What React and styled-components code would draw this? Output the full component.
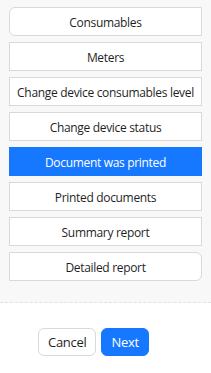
import React, { useState } from "react";
import styled, { createGlobalStyle } from "styled-components";

const GlobalStyle = createGlobalStyle`
  html, body {
    margin: 0;
    padding: 0;
    background: #ffffff;
    font-family: "Open Sans", "Noto Sans", "Liberation Sans", sans-serif;
  }
`;

const options = [
  "Consumables",
  "Meters",
  "Change device consumables level",
  "Change device status",
  "Document was printed",
  "Printed documents",
  "Summary report",
  "Detailed report",
];

function App() {
  const [selected, setSelected] = useState("Document was printed");
  return (
    <>
      <GlobalStyle />
      <Page>
        <Panel>
          <OptionGroup>
            {options.map((opt, i) => (
              <Option
                key={opt}
                $active={opt === selected}
                $first={i === 0}
                $last={i === options.length - 1}
                onClick={() => setSelected(opt)}
              >
                {opt}
              </Option>
            ))}
          </OptionGroup>
        </Panel>
        <Footer>
          <FooterBtn>Cancel</FooterBtn>
          <FooterBtn $primary>Next</FooterBtn>
        </Footer>
      </Page>
    </>
  );
}

const Page = styled.div`
  width: 211px;
  min-height: 373px;
  display: flex;
  flex-direction: column;
  background: #ffffff;
`;

const Panel = styled.div`
  background: #f8f8f8;
  padding: 7px 9px 21px 9px;
  border-bottom: 1px dashed #e2e2e2;
`;

const OptionGroup = styled.div`
  display: flex;
  flex-direction: column;
  gap: 6px;
`;

const Option = styled.button`
  height: 29px;
  width: 100%;
  box-sizing: border-box;
  padding: 1px 4px 0;
  font-family: inherit;
  font-size: 12px;
  letter-spacing: -0.32px;
  white-space: nowrap;
  color: ${(props) => (props.$active ? "#ffffff" : "#1f1f1f")};
  background: ${(props) => (props.$active ? "#1677ff" : "#ffffff")};
  border: 1px solid ${(props) => (props.$active ? "#1677ff" : "#d9d9d9")};
  border-radius: ${(props) =>
    props.$first ? "6px 0 0 6px" : props.$last ? "0 6px 6px 0" : "0"};
  cursor: pointer;
  outline: none;
`;

const Footer = styled.div`
  display: flex;
  gap: 5px;
  padding: 25px 0 0 38px;
`;

const FooterBtn = styled.button`
  height: 28px;
  padding: 0 9px;
  box-sizing: border-box;
  font-family: inherit;
  font-size: 13px;
  letter-spacing: -0.3px;
  color: ${(props) => (props.$primary ? "#ffffff" : "#1f1f1f")};
  background: ${(props) => (props.$primary ? "#1677ff" : "#ffffff")};
  border: 1px solid ${(props) => (props.$primary ? "#1677ff" : "#d9d9d9")};
  border-radius: 6px;
  cursor: pointer;
`;

export default App;
